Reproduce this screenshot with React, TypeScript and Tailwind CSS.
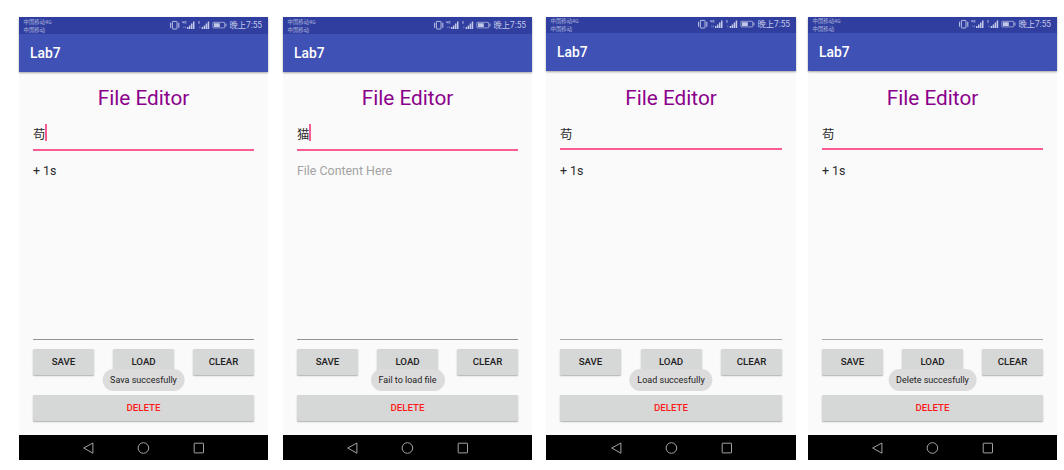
import { clsx } from "clsx";

type Screen = {
  name: string;
  content?: string;
  cursor?: boolean;
  toast: string;
  compact?: boolean;
  frame: string;
};

const screens: Screen[] = [
  { name: "苟", content: "+ 1s", cursor: true, toast: "Sava succesfully", frame: "w-[249px]" },
  { name: "猫", cursor: true, toast: "Fail to load file", frame: "ml-[15px] w-[249px]" },
  { name: "苟", content: "+ 1s", toast: "Load succesfully", compact: true, frame: "ml-[14px] w-[250px]" },
  { name: "苟", content: "+ 1s", toast: "Delete succesfully", compact: true, frame: "ml-[12px] w-[249px]" },
];

function StatusIcons() {
  return (
    <svg className="shrink-0" width="58" height="12" viewBox="0 0 58 12" fill="#c3c8e8">
      <rect x="3.4" y="2.4" width="4.6" height="7.6" rx="0.6" fill="none" stroke="#c3c8e8" strokeWidth="0.9" />
      <path d="M1.1 3.8h1v5h-1zM9.3 3.8h1v5h-1z" />
      <path d="M13.4 2.1h.7v1.2h.6V2.1h.6v2.5h-.6v-.7h-1.3zM15.8 2.1h1.5v.6h-.9v1.3h.4v-.6h.6v1.2h-1.6z" opacity=".85" />
      <path d="M14.4 7.6h1v1.6h-1zM16 7.6h1v1.6h-1z" opacity=".45" />
      <path d="M18 8h1.5v2H18zM20 6.4h1.5V10H20zM22 4.6h1.5V10H22zM24 2.6h1.5V10H24z" />
      <path d="M29.4 2h1.6v.5h-1v.6h.8v.5H30v.6h1v.5h-1.6z" opacity=".85" />
      <path d="M30.3 7.6h1v1.6h-1z" opacity=".45" />
      <path d="M32.7 8h1.5v2h-1.5zM34.7 6.4h1.5V10h-1.5zM36.7 4.6h1.5V10h-1.5zM38.7 2.6h1.5V10h-1.5z" />
      <rect x="43.9" y="3.3" width="11.8" height="5.6" rx="0.6" fill="none" stroke="#c3c8e8" strokeWidth="0.7" />
      <path d="M45 4.2h5.8V8H45zM56.5 4.6h.9v3h-.9z" />
    </svg>
  );
}

function NavBar() {
  return (
    <div className="flex h-[25px] items-center justify-center bg-black">
      <svg width="121" height="12" viewBox="0 0 121 12" fill="none" stroke="#b4b4b4" strokeWidth="0.9">
        <path d="M9.9 1 L0.7 6 L9.9 11.2 Z" strokeLinejoin="round" />
        <circle cx="60.4" cy="6" r="5.3" />
        <rect x="111.2" y="1.2" width="9.3" height="9.7" rx="0.4" />
      </svg>
    </div>
  );
}

function Button({ label, className }: { label: string; className: string }) {
  return (
    <button
      className={clsx(
        "flex h-[26px] items-center justify-center rounded-[1px] bg-[#d6d7d7] text-[9.7px] leading-none font-medium shadow-[0_1px_1.5px_rgba(0,0,0,0.3)]",
        className,
      )}
    >
      {label}
    </button>
  );
}

function Phone({ screen }: { screen: Screen }) {
  return (
    <div className={clsx("flex h-[443px] shrink-0 flex-col bg-[#fafafa]", screen.frame)}>
      <header
        className={clsx(
          "flex shrink-0 flex-col bg-[#3f51b5] shadow-[0_1px_2px_rgba(0,0,0,0.35)]",
          screen.compact ? "h-[54px]" : "h-[55px]",
        )}
      >
        <div
          className={clsx(
            "flex shrink-0 justify-between bg-[#303f9f] pr-[6px] pl-[4.5px] text-[#c3c8e8]",
            screen.compact ? "h-[16px]" : "h-[17px]",
          )}
        >
          <div className={clsx("text-[5.4px] leading-[7.6px] text-[#a9b0dc]", screen.compact ? "pt-px" : "pt-[2px]")}>
            <p>中国移动4G</p>
            <p>中国移动</p>
          </div>
          <div className={clsx("flex h-[16px] items-start", screen.compact ? "pt-px" : "pt-[2px]")}>
            <StatusIcons />
            <span className="ml-[2.5px] text-[8.3px] leading-[13px] whitespace-nowrap">晚上7:55</span>
          </div>
        </div>
        <div
          className={clsx(
            "flex flex-1 items-center pl-[11px] text-[13.8px] leading-none font-medium text-white",
            screen.compact ? "pt-px" : "pt-[2px]",
          )}
        >
          Lab7
        </div>
      </header>

      <main className={clsx("flex flex-1 flex-col px-[14px]", screen.compact && "pt-px")}>
        <h1 className="mt-[14px] text-center text-[20.75px] leading-[24px] text-[#8b008b]">File Editor</h1>
        <div
          className={clsx(
            "mt-[12px] flex items-start border-b-2 border-[#fb5d90] text-[12.4px] leading-[25px] text-[#2b2b2b]",
            screen.compact ? "h-[28px]" : "h-[29px]",
          )}
        >
          <span>{screen.name}</span>
          {screen.cursor && <span className="mt-[2px] h-[17px] w-[1.5px] bg-[#fb5d90]" />}
        </div>
        <div
          className={clsx(
            "border-b text-[12.4px] leading-[16px]",
            screen.compact ? "h-[190px] border-[#a8a8a8] pt-[13px]" : "h-[189px] border-[#929292] pt-[12px]",
            screen.content ? "text-[#2b2b2b]" : "text-[#a3a3a3]",
          )}
        >
          {screen.content ?? "File Content Here"}
        </div>
        <div className="relative mt-[9px] flex justify-between">
          <Button label="SAVE" className="w-[61px] text-[#212121]" />
          <Button label="LOAD" className="w-[61px] text-[#212121]" />
          <Button label="CLEAR" className="w-[61px] text-[#212121]" />
          <div className="absolute top-[20px] left-1/2 flex h-[22px] -translate-x-1/2 items-center rounded-full bg-[#dcdcdc] px-[8px] pt-px text-[9px] leading-none whitespace-nowrap text-[#222]">
            {screen.toast}
          </div>
        </div>
        <Button label="DELETE" className="mt-[20px] w-full text-[#ff1a1a]" />
      </main>
      <NavBar />
    </div>
  );
}

export default function App() {
  return (
    <div className="flex h-[470px] w-[1064px] overflow-hidden bg-white pt-[17px] pl-[19px] font-['Roboto','Noto_Sans_CJK_SC',sans-serif]">
      {screens.map((screen) => (
        <Phone key={screen.toast} screen={screen} />
      ))}
    </div>
  );
}
